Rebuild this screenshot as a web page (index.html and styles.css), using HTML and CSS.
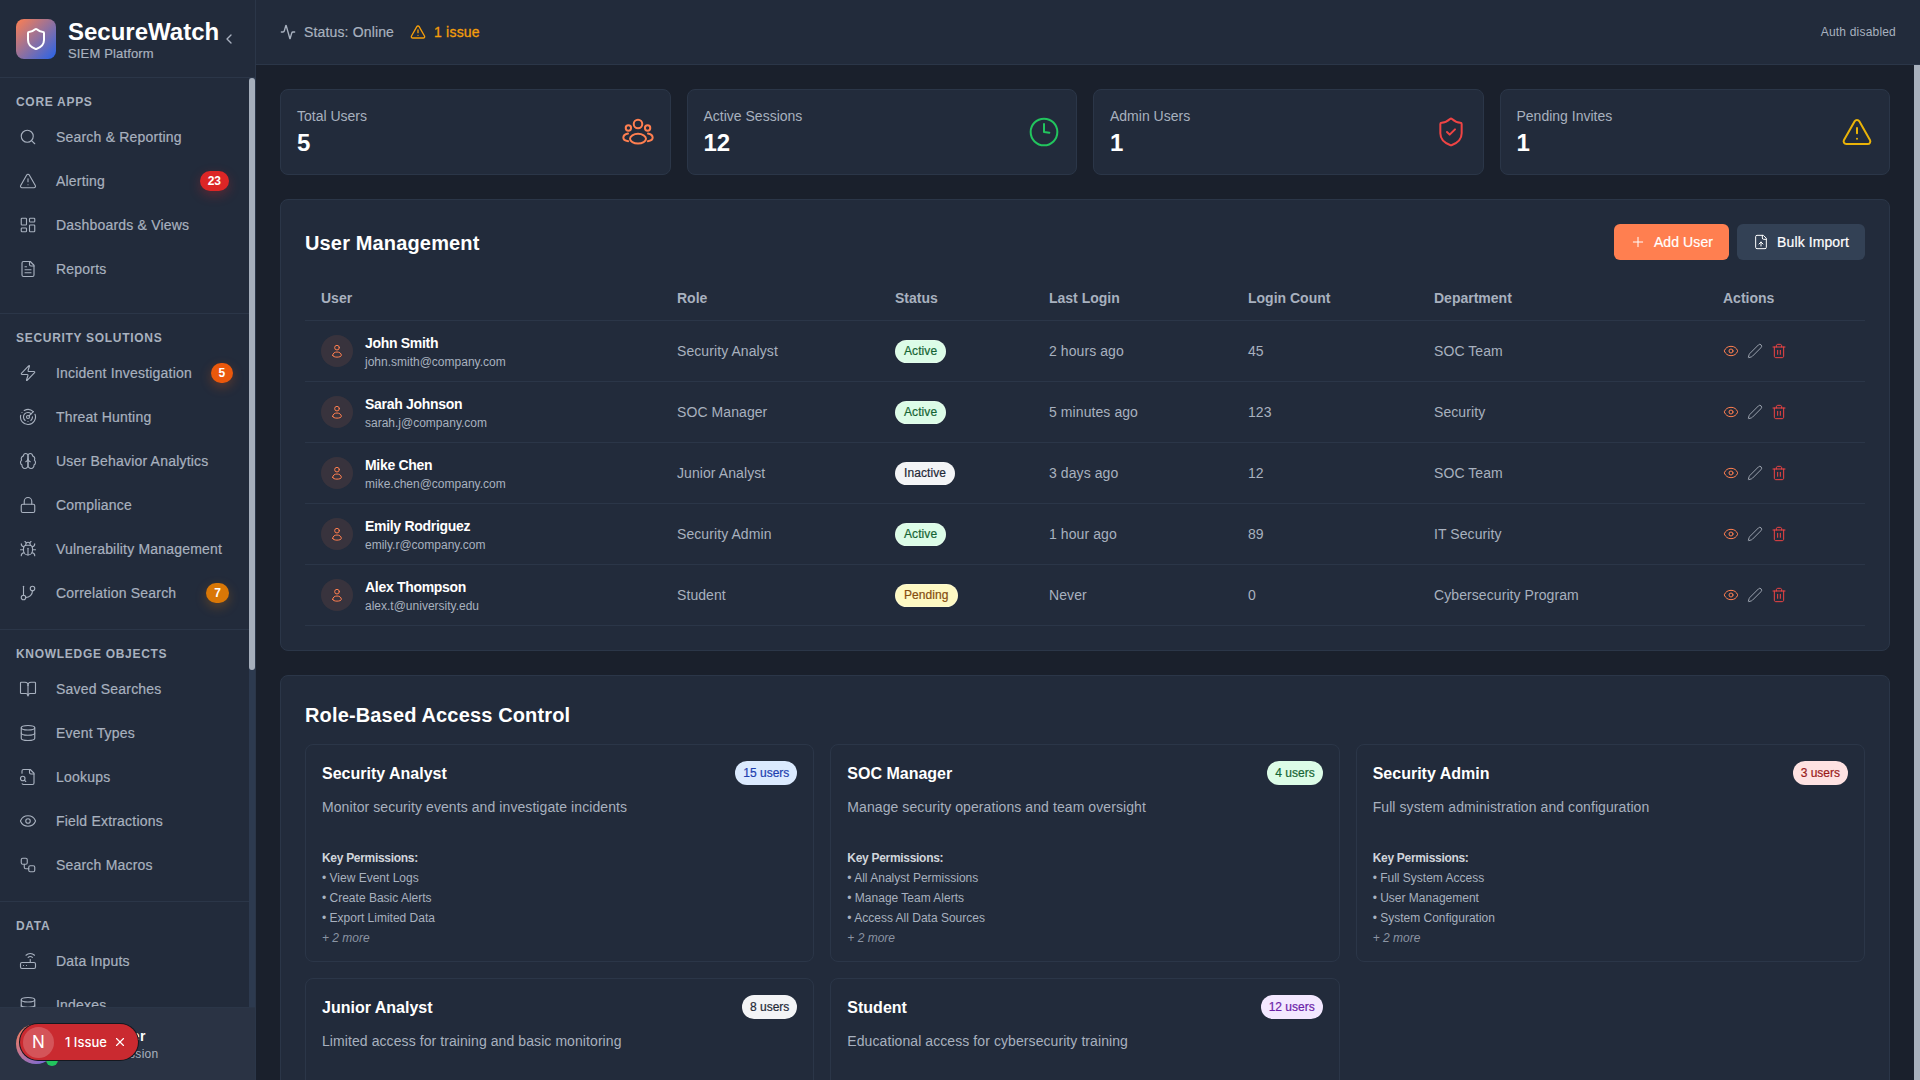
FILE: index.html
```html
<!DOCTYPE html>
<html lang="en">
<head>
    <meta charset="UTF-8">
    <meta name="viewport" content="width=device-width, initial-scale=1.0">
    <link rel="stylesheet" href="styles.css">
    <title>SecureWatch - User Management</title>
</head>
<body>
    <!-- icon sprite -->
    <svg class="sprite" xmlns="http://www.w3.org/2000/svg">
        <symbol id="i-shield" viewBox="0 0 24 24"><path d="M20 13c0 5-3.5 7.5-7.66 8.95a1 1 0 0 1-.67-.01C7.5 20.5 4 18 4 13V6a1 1 0 0 1 1-1c2 0 4.5-1.2 6.24-2.72a1.17 1.17 0 0 1 1.52 0C14.51 3.81 17 5 19 5a1 1 0 0 1 1 1z"/></symbol>
        <symbol id="i-shield-check" viewBox="0 0 24 24"><path d="M20 13c0 5-3.5 7.5-7.66 8.95a1 1 0 0 1-.67-.01C7.5 20.5 4 18 4 13V6a1 1 0 0 1 1-1c2 0 4.5-1.2 6.24-2.72a1.17 1.17 0 0 1 1.52 0C14.51 3.81 17 5 19 5a1 1 0 0 1 1 1z"/><path d="m9 12 2 2 4-4"/></symbol>
        <symbol id="i-chevron" viewBox="0 0 24 24"><path d="m15 18-6-6 6-6"/></symbol>
        <symbol id="i-search" viewBox="0 0 24 24"><circle cx="11" cy="11" r="8"/><path d="m21 21-4.3-4.3"/></symbol>
        <symbol id="i-alert" viewBox="0 0 24 24"><path d="m21.73 18-8-14a2 2 0 0 0-3.48 0l-8 14A2 2 0 0 0 4 21h16a2 2 0 0 0 1.73-3"/><path d="M12 9v4"/><path d="M12 17h.01"/></symbol>
        <symbol id="i-dashboard" viewBox="0 0 24 24"><rect x="3" y="3" width="7" height="9" rx="1"/><rect x="14" y="3" width="7" height="5" rx="1"/><rect x="14" y="12" width="7" height="9" rx="1"/><rect x="3" y="16" width="7" height="5" rx="1"/></symbol>
        <symbol id="i-file" viewBox="0 0 24 24"><path d="M15 2H6a2 2 0 0 0-2 2v16a2 2 0 0 0 2 2h12a2 2 0 0 0 2-2V7Z"/><path d="M14 2v4a2 2 0 0 0 2 2h4"/><path d="M10 9H8"/><path d="M16 13H8"/><path d="M16 17H8"/></symbol>
        <symbol id="i-zap" viewBox="0 0 24 24"><path d="M4 14a1 1 0 0 1-.78-1.63l9.9-10.2a.5.5 0 0 1 .86.46l-1.92 6.02A1 1 0 0 0 13 10h7a1 1 0 0 1 .78 1.63l-9.9 10.2a.5.5 0 0 1-.86-.46l1.92-6.02A1 1 0 0 0 11 14z"/></symbol>
        <symbol id="i-radar" viewBox="0 0 24 24"><path d="M19.07 4.93A10 10 0 0 0 6.99 3.34"/><path d="M4 6h.01"/><path d="M2.29 9.62A10 10 0 1 0 21.31 8.35"/><path d="M16.24 7.76A6 6 0 1 0 8.23 16.67"/><path d="M12 18h.01"/><path d="M17.99 11.66A6 6 0 0 1 15.77 16.67"/><circle cx="12" cy="12" r="2"/><path d="m13.41 10.59 5.66-5.66"/></symbol>
        <symbol id="i-brain" viewBox="0 0 24 24"><path d="M12 5a3 3 0 1 0-5.997.125 4 4 0 0 0-2.526 5.77 4 4 0 0 0 .556 6.588A4 4 0 1 0 12 18Z"/><path d="M12 5a3 3 0 1 1 5.997.125 4 4 0 0 1 2.526 5.77 4 4 0 0 1-.556 6.588A4 4 0 1 1 12 18Z"/><path d="M15 13a4.5 4.5 0 0 1-3-4 4.5 4.5 0 0 1-3 4"/></symbol>
        <symbol id="i-lock" viewBox="0 0 24 24"><rect x="3" y="11" width="18" height="11" rx="2"/><path d="M7 11V7a5 5 0 0 1 10 0v4"/></symbol>
        <symbol id="i-bug" viewBox="0 0 24 24"><path d="m8 2 1.88 1.88"/><path d="M14.12 3.88 16 2"/><path d="M9 7.13v-1a3.003 3.003 0 1 1 6 0v1"/><path d="M12 20c-3.3 0-6-2.7-6-6v-3a4 4 0 0 1 4-4h4a4 4 0 0 1 4 4v3c0 3.3-2.7 6-6 6"/><path d="M12 20v-9"/><path d="M6.53 9C4.6 8.8 3 7.1 3 5"/><path d="M6 13H2"/><path d="M3 21c0-2.1 1.7-3.9 3.8-4"/><path d="M20.97 5c0 2.1-1.6 3.8-3.5 4"/><path d="M22 13h-4"/><path d="M17.2 17c2.1.1 3.8 1.9 3.8 4"/></symbol>
        <symbol id="i-branch" viewBox="0 0 24 24"><path d="M6 3v12"/><circle cx="18" cy="6" r="3"/><circle cx="6" cy="18" r="3"/><path d="M18 9a9 9 0 0 1-9 9"/></symbol>
        <symbol id="i-book" viewBox="0 0 24 24"><path d="M12 7v14"/><path d="M3 18a1 1 0 0 1-1-1V4a1 1 0 0 1 1-1h5a4 4 0 0 1 4 4 4 4 0 0 1 4-4h5a1 1 0 0 1 1 1v13a1 1 0 0 1-1 1h-6a3 3 0 0 0-3 3 3 3 0 0 0-3-3z"/></symbol>
        <symbol id="i-database" viewBox="0 0 24 24"><ellipse cx="12" cy="5" rx="9" ry="3"/><path d="M3 5V19A9 3 0 0 0 21 19V5"/><path d="M3 12A9 3 0 0 0 21 12"/></symbol>
        <symbol id="i-file-search" viewBox="0 0 24 24"><path d="M14 2v4a2 2 0 0 0 2 2h4"/><path d="M4.268 21a2 2 0 0 0 1.727 1H18a2 2 0 0 0 2-2V7l-5-5H6a2 2 0 0 0-2 2v3"/><path d="m9 18-1.5-1.5"/><circle cx="5" cy="14" r="3"/></symbol>
        <symbol id="i-eye" viewBox="0 0 24 24"><path d="M2.062 12.348a1 1 0 0 1 0-.696 10.75 10.75 0 0 1 19.876 0 1 1 0 0 1 0 .696 10.75 10.75 0 0 1-19.876 0"/><circle cx="12" cy="12" r="3"/></symbol>
        <symbol id="i-workflow" viewBox="0 0 24 24"><rect x="3" y="3" width="8" height="8" rx="2"/><path d="M7 11v4a2 2 0 0 0 2 2h4"/><rect x="13" y="13" width="8" height="8" rx="2"/></symbol>
        <symbol id="i-router" viewBox="0 0 24 24"><rect x="2" y="14" width="20" height="8" rx="2"/><path d="M6.01 18H6"/><path d="M10.01 18H10"/><path d="M15 10v4"/><path d="M17.84 7.17a4 4 0 0 0-5.66 0"/><path d="M20.66 4.34a8 8 0 0 0-11.31 0"/></symbol>
        <symbol id="i-activity" viewBox="0 0 24 24"><path d="M22 12h-2.48a2 2 0 0 0-1.93 1.46l-2.35 8.36a.25.25 0 0 1-.48 0L9.24 2.18a.25.25 0 0 0-.48 0l-2.35 8.36A2 2 0 0 1 4.49 12H2"/></symbol>
        <symbol id="i-users" viewBox="0 0 24 24"><circle cx="12" cy="6" r="3.2"/><circle cx="4.8" cy="9" r="2"/><circle cx="19.2" cy="9" r="2"/><ellipse cx="12" cy="17" rx="6" ry="3.6"/><path d="M4.5 13.2C2.5 13.6 1 15 1 16.4s1.3 2.2 3.6 2.5"/><path d="M19.5 13.2c2 .4 3.5 1.8 3.5 3.2s-1.3 2.2-3.6 2.5"/></symbol>
        <symbol id="i-clock" viewBox="0 0 24 24"><circle cx="12" cy="12" r="10"/><path d="M12 6v6l4 .5"/></symbol>
        <symbol id="i-plus" viewBox="0 0 24 24"><path d="M5 12h14"/><path d="M12 5v14"/></symbol>
        <symbol id="i-file-up" viewBox="0 0 24 24"><path d="M15 2H6a2 2 0 0 0-2 2v16a2 2 0 0 0 2 2h12a2 2 0 0 0 2-2V7Z"/><path d="M14 2v4a2 2 0 0 0 2 2h4"/><path d="M12 12v6"/><path d="m15 15-3-3-3 3"/></symbol>
        <symbol id="i-user" viewBox="0 0 24 24"><circle cx="12" cy="7" r="3.5"/><path d="M5.5 18.5c0-3 2.9-5 6.5-5s6.500 2 6.500 5c0 1.700-2.900 2.700-6.500 2.700s-6.500-1-6.500-2.700z"/></symbol>
        <symbol id="i-pencil" viewBox="0 0 24 24"><path d="M21.174 6.812a1 1 0 0 0-3.986-3.987L3.842 16.174a2 2 0 0 0-.5.83l-1.321 4.352a.5.5 0 0 0 .623.622l4.353-1.32a2 2 0 0 0 .83-.497z"/></symbol>
        <symbol id="i-trash" viewBox="0 0 24 24"><path d="M3 6h18"/><path d="M19 6v14c0 1-1 2-2 2H7c-1 0-2-1-2-2V6"/><path d="M8 6V4c0-1 1-2 2-2h4c1 0 2 1 2 2v2"/><path d="M10 11v6"/><path d="M14 11v6"/></symbol>
        <symbol id="i-x" viewBox="0 0 24 24"><path d="M18 6 6 18"/><path d="m6 6 12 12"/></symbol>
    </svg>

    <div class="app">
        <aside class="sidebar">
            <div class="brand">
                <div class="brand-logo"><svg class="icon icon-24"><use href="#i-shield"/></svg></div>
                <div class="brand-text">
                    <div class="brand-name">SecureWatch</div>
                    <div class="brand-sub">SIEM Platform</div>
                </div>
                <svg class="icon icon-16 brand-toggle"><use href="#i-chevron"/></svg>
            </div>

            <div class="nav-wrap">
                <nav class="nav">
                    <div class="nav-section nav-section-first">
                        <h3 class="nav-label">Core Apps</h3>
                        <a class="nav-item"><svg class="icon icon-18"><use href="#i-search"/></svg>Search &amp; Reporting</a>
                        <a class="nav-item"><svg class="icon icon-18"><use href="#i-alert"/></svg>Alerting<span class="nav-badge badge-red">23</span></a>
                        <a class="nav-item"><svg class="icon icon-18"><use href="#i-dashboard"/></svg>Dashboards &amp; Views</a>
                        <a class="nav-item"><svg class="icon icon-18"><use href="#i-file"/></svg>Reports</a>
                    </div>
                    <div class="nav-section">
                        <h3 class="nav-label">Security Solutions</h3>
                        <a class="nav-item"><svg class="icon icon-18"><use href="#i-zap"/></svg>Incident Investigation<span class="nav-badge badge-orange">5</span></a>
                        <a class="nav-item"><svg class="icon icon-18"><use href="#i-radar"/></svg>Threat Hunting</a>
                        <a class="nav-item"><svg class="icon icon-18"><use href="#i-brain"/></svg>User Behavior Analytics</a>
                        <a class="nav-item"><svg class="icon icon-18"><use href="#i-lock"/></svg>Compliance</a>
                        <a class="nav-item"><svg class="icon icon-18"><use href="#i-bug"/></svg>Vulnerability Management</a>
                        <a class="nav-item"><svg class="icon icon-18"><use href="#i-branch"/></svg>Correlation Search<span class="nav-badge badge-amber">7</span></a>
                    </div>
                    <div class="nav-section">
                        <h3 class="nav-label">Knowledge Objects</h3>
                        <a class="nav-item"><svg class="icon icon-18"><use href="#i-book"/></svg>Saved Searches</a>
                        <a class="nav-item"><svg class="icon icon-18"><use href="#i-database"/></svg>Event Types</a>
                        <a class="nav-item"><svg class="icon icon-18"><use href="#i-file-search"/></svg>Lookups</a>
                        <a class="nav-item"><svg class="icon icon-18"><use href="#i-eye"/></svg>Field Extractions</a>
                        <a class="nav-item"><svg class="icon icon-18"><use href="#i-workflow"/></svg>Search Macros</a>
                    </div>
                    <div class="nav-section">
                        <h3 class="nav-label">Data</h3>
                        <a class="nav-item"><svg class="icon icon-18"><use href="#i-router"/></svg>Data Inputs</a>
                        <a class="nav-item"><svg class="icon icon-18"><use href="#i-database"/></svg>Indexes</a>
                    </div>
                </nav>
                <div class="scroll-track"><div class="scroll-thumb"></div></div>
            </div>

            <div class="side-user">
                <div class="side-avatar"><span class="side-dot"></span></div>
                <div>
                    <div class="side-name">Guest User</div>
                    <div class="side-sub">Current Session</div>
                </div>
            </div>
        </aside>

        <div class="page">
            <header class="topbar">
                <div class="topbar-left">
                    <span class="topbar-status"><svg class="icon icon-16"><use href="#i-activity"/></svg>Status: Online</span>
                    <span class="topbar-issue"><svg class="icon icon-16"><use href="#i-alert"/></svg>1 issue</span>
                </div>
                <span class="topbar-auth">Auth disabled</span>
            </header>

            <div class="main">
                <main class="content">
                    <div class="stats">
                        <div class="stat-card">
                            <div><div class="stat-label">Total Users</div><div class="stat-value">5</div></div>
                            <svg class="icon icon-32 c-orange"><use href="#i-users"/></svg>
                        </div>
                        <div class="stat-card">
                            <div><div class="stat-label">Active Sessions</div><div class="stat-value">12</div></div>
                            <svg class="icon icon-32 c-green"><use href="#i-clock"/></svg>
                        </div>
                        <div class="stat-card">
                            <div><div class="stat-label">Admin Users</div><div class="stat-value">1</div></div>
                            <svg class="icon icon-32 c-red"><use href="#i-shield-check"/></svg>
                        </div>
                        <div class="stat-card">
                            <div><div class="stat-label">Pending Invites</div><div class="stat-value">1</div></div>
                            <svg class="icon icon-32 c-yellow"><use href="#i-alert"/></svg>
                        </div>
                    </div>

                    <section class="panel">
                        <div class="panel-head">
                            <h2>User Management</h2>
                            <div class="panel-actions">
                                <button class="btn btn-primary"><svg class="icon icon-16"><use href="#i-plus"/></svg>Add User</button>
                                <button class="btn btn-muted"><svg class="icon icon-16"><use href="#i-file-up"/></svg>Bulk Import</button>
                            </div>
                        </div>
                        <table class="users">
                            <colgroup>
                                <col class="col-user"><col class="col-role"><col class="col-status"><col class="col-login"><col class="col-count"><col class="col-dept"><col class="col-actions">
                            </colgroup>
                            <thead>
                                <tr><th>User</th><th>Role</th><th>Status</th><th>Last Login</th><th>Login Count</th><th>Department</th><th>Actions</th></tr>
                            </thead>
                            <tbody>
                                <tr>
                                    <td><div class="user-cell"><span class="avatar"><svg class="icon icon-16"><use href="#i-user"/></svg></span><div class="user-info"><div class="user-name">John Smith</div><div class="user-email">john.smith@company.com</div></div></div></td>
                                    <td>Security Analyst</td>
                                    <td><span class="status status-active">Active</span></td>
                                    <td>2 hours ago</td>
                                    <td>45</td>
                                    <td>SOC Team</td>
                                    <td><div class="row-actions"><svg class="icon icon-16 c-orange"><use href="#i-eye"/></svg><svg class="icon icon-16 c-gray"><use href="#i-pencil"/></svg><svg class="icon icon-16 c-red"><use href="#i-trash"/></svg></div></td>
                                </tr>
                                <tr>
                                    <td><div class="user-cell"><span class="avatar"><svg class="icon icon-16"><use href="#i-user"/></svg></span><div class="user-info"><div class="user-name">Sarah Johnson</div><div class="user-email">sarah.j@company.com</div></div></div></td>
                                    <td>SOC Manager</td>
                                    <td><span class="status status-active">Active</span></td>
                                    <td>5 minutes ago</td>
                                    <td>123</td>
                                    <td>Security</td>
                                    <td><div class="row-actions"><svg class="icon icon-16 c-orange"><use href="#i-eye"/></svg><svg class="icon icon-16 c-gray"><use href="#i-pencil"/></svg><svg class="icon icon-16 c-red"><use href="#i-trash"/></svg></div></td>
                                </tr>
                                <tr>
                                    <td><div class="user-cell"><span class="avatar"><svg class="icon icon-16"><use href="#i-user"/></svg></span><div class="user-info"><div class="user-name">Mike Chen</div><div class="user-email">mike.chen@company.com</div></div></div></td>
                                    <td>Junior Analyst</td>
                                    <td><span class="status status-inactive">Inactive</span></td>
                                    <td>3 days ago</td>
                                    <td>12</td>
                                    <td>SOC Team</td>
                                    <td><div class="row-actions"><svg class="icon icon-16 c-orange"><use href="#i-eye"/></svg><svg class="icon icon-16 c-gray"><use href="#i-pencil"/></svg><svg class="icon icon-16 c-red"><use href="#i-trash"/></svg></div></td>
                                </tr>
                                <tr>
                                    <td><div class="user-cell"><span class="avatar"><svg class="icon icon-16"><use href="#i-user"/></svg></span><div class="user-info"><div class="user-name">Emily Rodriguez</div><div class="user-email">emily.r@company.com</div></div></div></td>
                                    <td>Security Admin</td>
                                    <td><span class="status status-active">Active</span></td>
                                    <td>1 hour ago</td>
                                    <td>89</td>
                                    <td>IT Security</td>
                                    <td><div class="row-actions"><svg class="icon icon-16 c-orange"><use href="#i-eye"/></svg><svg class="icon icon-16 c-gray"><use href="#i-pencil"/></svg><svg class="icon icon-16 c-red"><use href="#i-trash"/></svg></div></td>
                                </tr>
                                <tr>
                                    <td><div class="user-cell"><span class="avatar"><svg class="icon icon-16"><use href="#i-user"/></svg></span><div class="user-info"><div class="user-name">Alex Thompson</div><div class="user-email">alex.t@university.edu</div></div></div></td>
                                    <td>Student</td>
                                    <td><span class="status status-pending">Pending</span></td>
                                    <td>Never</td>
                                    <td>0</td>
                                    <td>Cybersecurity Program</td>
                                    <td><div class="row-actions"><svg class="icon icon-16 c-orange"><use href="#i-eye"/></svg><svg class="icon icon-16 c-gray"><use href="#i-pencil"/></svg><svg class="icon icon-16 c-red"><use href="#i-trash"/></svg></div></td>
                                </tr>
                            </tbody>
                        </table>
                    </section>

                    <section class="panel">
                        <h2 class="panel-title">Role-Based Access Control</h2>
                        <div class="roles">
                            <div class="role-card">
                                <div class="role-head"><h4>Security Analyst</h4><span class="role-count count-blue">15 users</span></div>
                                <p class="role-desc">Monitor security events and investigate incidents</p>
                                <div class="role-perms">
                                    <div class="perms-title">Key Permissions:</div>
                                    <div>• View Event Logs</div>
                                    <div>• Create Basic Alerts</div>
                                    <div>• Export Limited Data</div>
                                    <div class="perms-more">+ 2 more</div>
                                </div>
                            </div>
                            <div class="role-card">
                                <div class="role-head"><h4>SOC Manager</h4><span class="role-count count-green">4 users</span></div>
                                <p class="role-desc">Manage security operations and team oversight</p>
                                <div class="role-perms">
                                    <div class="perms-title">Key Permissions:</div>
                                    <div>• All Analyst Permissions</div>
                                    <div>• Manage Team Alerts</div>
                                    <div>• Access All Data Sources</div>
                                    <div class="perms-more">+ 2 more</div>
                                </div>
                            </div>
                            <div class="role-card">
                                <div class="role-head"><h4>Security Admin</h4><span class="role-count count-red">3 users</span></div>
                                <p class="role-desc">Full system administration and configuration</p>
                                <div class="role-perms">
                                    <div class="perms-title">Key Permissions:</div>
                                    <div>• Full System Access</div>
                                    <div>• User Management</div>
                                    <div>• System Configuration</div>
                                    <div class="perms-more">+ 2 more</div>
                                </div>
                            </div>
                            <div class="role-card role-card-tall">
                                <div class="role-head"><h4>Junior Analyst</h4><span class="role-count count-gray">8 users</span></div>
                                <p class="role-desc">Limited access for training and basic monitoring</p>
                            </div>
                            <div class="role-card role-card-tall">
                                <div class="role-head"><h4>Student</h4><span class="role-count count-purple">12 users</span></div>
                                <p class="role-desc">Educational access for cybersecurity training</p>
                            </div>
                        </div>
                    </section>
                </main>
                <div class="scroll-track scroll-track-main"><div class="scroll-thumb scroll-thumb-main"></div></div>
            </div>
        </div>
    </div>

    <div class="dev-toast">
        <span class="dev-logo">N</span>
        <span class="dev-text">1 Issue</span>
        <svg class="icon icon-14"><use href="#i-x"/></svg>
    </div>
</body>
</html>
```

FILE: styles.css
```css
* {
    box-sizing: border-box;
}

html, body {
    height: 100%;
    margin: 0;
    overflow: hidden;
}

body {
    font-family: "Liberation Sans", Arial, sans-serif;
    background: #1a202c;
    color: #a8b1bf;
    font-size: 14px;
    line-height: 20px;
}

.sprite {
    display: none;
}

.icon {
    fill: none;
    stroke: currentColor;
    stroke-width: 2;
    stroke-linecap: round;
    stroke-linejoin: round;
    flex-shrink: 0;
}

.icon-14 { width: 14px; height: 14px; }
.icon-16 { width: 16px; height: 16px; }
.icon-18 { width: 18px; height: 18px; stroke-width: 1.5; }
.icon-24 { width: 24px; height: 24px; }
.icon-32 { width: 32px; height: 32px; stroke-width: 1.5; }

.c-orange { color: #ff7f50; }
.c-green { color: #22c55e; }
.c-red { color: #ef4444; }
.c-yellow { color: #eab308; }
.c-gray { color: #9ca3af; }

.app {
    display: flex;
    height: 100vh;
}

/* sidebar */
.sidebar {
    width: 256px;
    flex-shrink: 0;
    display: flex;
    flex-direction: column;
    background: #222b3b;
    border-right: 1px solid #2b3648;
}

.brand {
    height: 78px;
    flex-shrink: 0;
    display: flex;
    align-items: center;
    gap: 12px;
    padding: 0 16px;
    border-bottom: 1px solid #2b3648;
}

.brand-logo {
    width: 40px;
    height: 40px;
    flex-shrink: 0;
    border-radius: 8px;
    display: flex;
    align-items: center;
    justify-content: center;
    color: #fff;
    background: linear-gradient(135deg, #ff7f50, #2563eb);
}

.brand-name {
    margin-top: 2px;
    color: #fff;
    font-size: 24px;
    line-height: 30px;
    font-weight: 700;
}

.brand-sub {
    margin-top: -1px;
    font-size: 13px;
    line-height: 16px;
    letter-spacing: 0.15px;
    -webkit-text-stroke: 0.2px;
}

.brand-toggle {
    margin: 1px 0 0 -10px;
}

.nav-wrap {
    flex: 1;
    min-height: 0;
    display: flex;
}

.nav {
    flex: 1;
    min-width: 0;
    overflow: hidden;
}

/* scrollbars are drawn, the capture browser hides real ones */
.scroll-track {
    width: 6px;
    flex-shrink: 0;
    background: #2d3a4f;
}

.scroll-thumb {
    height: 592px;
    background: #a5aebb;
    border-radius: 3px;
}

.scroll-track-main {
    background: #1a202c;
}

.scroll-thumb-main {
    height: 100%;
    background: #a9b1bd;
    border-radius: 0;
}

.nav-section {
    padding: 16px 0 14px;
    border-bottom: 1px solid #2b3648;
}

.nav-section-first {
    padding-bottom: 22px;
}

.nav-section:last-child {
    border-bottom: none;
}

.nav-label {
    margin: 0 0 5px;
    padding: 0 16px;
    font-size: 12px;
    line-height: 16px;
    font-weight: 700;
    letter-spacing: 0.7px;
    text-transform: uppercase;
    color: #a8b1bf;
}

.nav-item {
    display: flex;
    align-items: center;
    gap: 19px;
    height: 44px;
    margin: 0 8px;
    padding: 0 12px 0 11px;
    white-space: nowrap;
    letter-spacing: 0.2px;
    -webkit-text-stroke: 0.2px;
    color: #a8b1bf;
}

.nav-badge {
    margin-left: auto;
    min-width: 22px;
    height: 20px;
    padding: 0 8px;
    border-radius: 10px;
    display: flex;
    align-items: center;
    justify-content: center;
    color: #fff;
    font-size: 12px;
    font-weight: 700;
    letter-spacing: 0;
    -webkit-text-stroke: 0;
}

.badge-red { background: #dc2626; box-shadow: 0 4px 12px rgba(220, 38, 38, 0.3); }
.badge-orange { background: #ea580c; box-shadow: 0 4px 12px rgba(234, 88, 12, 0.3); }
.badge-amber { background: #d97706; box-shadow: 0 4px 12px rgba(217, 119, 6, 0.3); }

.side-user {
    height: 73px;
    flex-shrink: 0;
    display: flex;
    align-items: center;
    gap: 12px;
    padding: 0 16px;
    background: #2a3344;
    border-top: 1px solid #2b3648;
}

.side-avatar {
    position: relative;
    width: 40px;
    height: 40px;
    border-radius: 50%;
    background: linear-gradient(135deg, #ff7f50, #6366f1);
}

.side-dot {
    position: absolute;
    right: -2px;
    bottom: -2px;
    width: 12px;
    height: 12px;
    border-radius: 50%;
    background: #22c55e;
}

.side-name {
    color: #fff;
    font-weight: 700;
    letter-spacing: 0.3px;
}

.side-sub {
    font-size: 12px;
    line-height: 16px;
    letter-spacing: 0.3px;
}

/* top bar */
.page {
    flex: 1;
    min-width: 0;
    display: flex;
    flex-direction: column;
}

.topbar {
    height: 65px;
    flex-shrink: 0;
    display: flex;
    align-items: center;
    justify-content: space-between;
    padding: 0 24px;
    background: #222b3b;
    border-bottom: 1px solid #2b3648;
}

.topbar-left {
    display: flex;
    gap: 16px;
}

.topbar-status, .topbar-issue {
    display: flex;
    align-items: center;
    gap: 8px;
}

.topbar-status {
    letter-spacing: 0.15px;
    -webkit-text-stroke: 0.2px;
}

.topbar-issue {
    color: #f59e0b;
    letter-spacing: 0.2px;
    -webkit-text-stroke: 0.3px;
}

.topbar-auth {
    font-size: 12px;
    letter-spacing: 0.2px;
}

/* main area */
.main {
    flex: 1;
    min-height: 0;
    display: flex;
}

.content {
    flex: 1;
    min-width: 0;
    overflow: hidden;
    padding: 24px;
}

.stats {
    display: grid;
    grid-template-columns: repeat(4, 1fr);
    gap: 16px;
    margin-bottom: 24px;
}

.stat-card {
    display: flex;
    align-items: center;
    justify-content: space-between;
    padding: 16px;
    background: #222b3b;
    border: 1px solid #2b3648;
    border-radius: 8px;
}

.stat-value {
    margin: 1px 0 -1px;
    color: #fff;
    font-size: 24px;
    line-height: 32px;
    font-weight: 700;
}

.panel {
    padding: 24px;
    margin-bottom: 24px;
    background: #222b3b;
    border: 1px solid #2b3648;
    border-radius: 8px;
}

.panel h2 {
    margin: 1px 0 -1px;
    color: #fff;
    font-size: 20px;
    line-height: 28px;
    font-weight: 700;
    letter-spacing: 0.15px;
}

.panel-head {
    display: flex;
    align-items: center;
    justify-content: space-between;
    margin-bottom: 16px;
}

.panel-actions {
    display: flex;
    gap: 8px;
}

.btn {
    height: 36px;
    display: flex;
    align-items: center;
    gap: 8px;
    padding: 0 16px;
    border: none;
    border-radius: 6px;
    color: #fff;
    font-family: inherit;
    font-size: 14px;
    letter-spacing: 0.1px;
    -webkit-text-stroke: 0.2px;
}

.btn .icon {
    stroke-width: 1.5;
}

.btn-primary { background: #ff7f50; }
.btn-muted { background: #334155; }

/* users table */
.users {
    width: 100%;
    table-layout: fixed;
    border-collapse: collapse;
}

.col-user { width: 356px; }
.col-role { width: 218px; }
.col-status { width: 154px; }
.col-login { width: 199px; }
.col-count { width: 186px; }
.col-dept { width: 289px; }

.users th {
    height: 44px;
    padding: 0 16px;
    text-align: left;
    font-weight: 700;
    border-bottom: 1px solid #2b3648;
}

.users td {
    height: 61px;
    padding: 0 16px;
    letter-spacing: 0.08px;
    border-bottom: 1px solid #2b3648;
}

.user-cell {
    display: flex;
    align-items: center;
    gap: 12px;
}

.avatar {
    width: 32px;
    height: 32px;
    border-radius: 50%;
    display: flex;
    align-items: center;
    justify-content: center;
    color: #ff7f50;
    background: rgba(255, 127, 80, 0.1);
}

.avatar .icon {
    stroke-width: 1.5;
}

.user-info {
    padding-top: 2px;
}

.user-name {
    color: #fff;
    font-weight: 700;
    letter-spacing: -0.3px;
}

.user-email {
    margin-top: 1px;
    font-size: 12px;
    line-height: 16px;
    letter-spacing: 0;
}

.status {
    display: inline-block;
    margin-top: 2px;
    padding: 3px 8px;
    border-radius: 12px;
    border: 1px solid rgba(255, 255, 255, 0.2);
    font-size: 12px;
    line-height: 15px;
    -webkit-text-stroke: 0.2px;
}

.status-active { background: #dcfce7; color: #166534; }
.status-inactive { background: #f3f4f6; color: #1f2937; }
.status-pending { background: #fef9c3; color: #854d0e; }

.row-actions {
    display: flex;
    gap: 8px;
}

.row-actions .icon {
    stroke-width: 1.5;
}

/* roles */
.panel .panel-title {
    margin: 1px 0 15px;
}

.roles {
    display: grid;
    grid-template-columns: repeat(3, 1fr);
    gap: 16px;
}

.role-card {
    padding: 16px 16px 13px;
    border: 1px solid #2b3648;
    border-radius: 8px;
}

.role-card-tall {
    min-height: 218px;
}

.role-head {
    display: flex;
    align-items: center;
    justify-content: space-between;
}

.role-head h4 {
    margin: 2px 0 0;
    color: #fff;
    font-size: 16px;
    line-height: 22px;
    font-weight: 700;
}

.role-count {
    height: 24px;
    padding: 0 8px;
    border-radius: 12px;
    font-size: 12px;
    line-height: 24px;
    -webkit-text-stroke: 0.2px;
}

.count-blue { background: #dbeafe; color: #1e40af; }
.count-green { background: #dcfce7; color: #166534; }
.count-red { background: #fee2e2; color: #991b1b; }
.count-gray { background: #f3f4f6; color: #1f2937; }
.count-purple { background: #f3e8ff; color: #6b21a8; }

.role-desc {
    margin: 12px 0 0;
    letter-spacing: 0.08px;
}

.role-perms {
    margin-top: 31px;
    font-size: 12px;
}

.perms-title {
    font-weight: 700;
    letter-spacing: -0.3px;
    color: #d1d5db;
}

.perms-more {
    font-style: italic;
    color: #8b94a3;
}

/* dev tools pill */
.dev-toast {
    position: absolute;
    left: 20px;
    top: 1024px;
    width: 118px;
    height: 36px;
    display: flex;
    align-items: center;
    padding: 0 0 0 3px;
    color: #fff;
    font-family: "Inter", sans-serif;
    background: #ca2a30;
    border-radius: 18px;
    box-shadow: 0 0 0 1px #14181f;
}

.dev-logo {
    width: 31px;
    height: 31px;
    border-radius: 50%;
    display: flex;
    align-items: center;
    justify-content: center;
    font-size: 17px;
    background: rgba(255, 255, 255, 0.2);
}

.dev-text {
    margin: 0 6px 0 11px;
    font-size: 13px;
    font-weight: 500;
    white-space: nowrap;
}
```
